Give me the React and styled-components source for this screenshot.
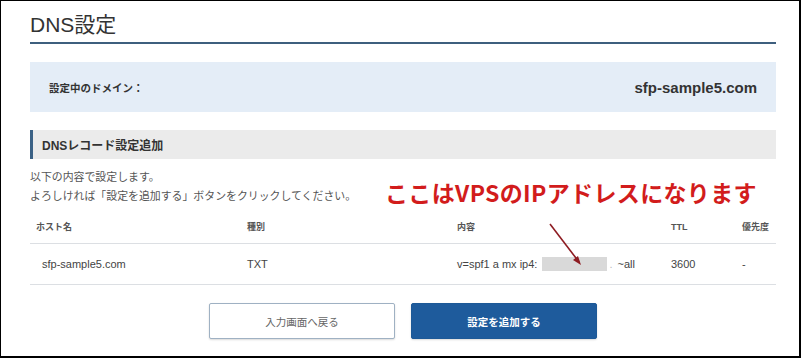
import React from "react";
import styled, { createGlobalStyle } from "styled-components";

const Global = createGlobalStyle`
  html, body { margin: 0; padding: 0; background: #fff; }
  body {
    font-family: "Liberation Sans", "Noto Sans CJK JP", sans-serif;
    color: #333;
    width: 802px;
    height: 359px;
    overflow: hidden;
  }
`;

const Frame = styled.div`
  position: relative;
  box-sizing: border-box;
  width: 801px;
  height: 358px;
  border-style: solid;
  border-color: #000;
  border-width: 1px 2px 2px 1px;
  background: #fff;
  padding-left: 29px;
`;

const Content = styled.div`
  width: 746px;
  display: flex;
  flex-direction: column;
`;

const Title = styled.h1`
  margin: 0;
  padding: 12px 0 5px 0;
  font-size: 21px;
  line-height: 24px;
  font-weight: normal;
  color: #333;
  border-bottom: 2px solid #3e5f7e;
`;

const DomainBox = styled.div`
  margin-top: 18px;
  height: 50px;
  background: #e4edf7;
  display: flex;
  align-items: center;
  justify-content: space-between;
  padding: 0 19px;
`;

const DomainLabel = styled.span`
  font-family: "Noto Sans CJK JP", sans-serif;
  font-size: 10.5px;
  font-weight: bold;
  color: #333;
`;

const DomainName = styled.span`
  font-size: 15px;
  font-weight: bold;
  color: #333;
`;

const SectionHeader = styled.div`
  margin-top: 18px;
  height: 29px;
  background: #ebebeb;
  border-left: 3px solid #3b6185;
  padding-left: 9px;
  display: flex;
  align-items: center;
  font-family: "Liberation Sans", "Noto Sans CJK JP", sans-serif;
  font-size: 12px;
  font-weight: bold;
  color: #333;
`;

const Para = styled.p`
  margin: 8px 0 0 0;
  font-family: "Noto Sans CJK JP", sans-serif;
  font-size: 10.9px;
  line-height: 19px;
  color: #555;
`;

const Row = styled.div`
  display: grid;
  grid-template-columns: 211px 210px 214px 71px 40px;
  align-items: center;
  border-bottom: 1px solid #dcdfe3;
  height: ${(p) => p.$h}px;
  padding-top: ${(p) => p.$pt || 0}px;
  box-sizing: border-box;
`;

const HeadCell = styled.div`
  padding-left: 6px;
  font-family: "Liberation Sans", "Noto Sans CJK JP", sans-serif;
  font-size: 9px;
  font-weight: bold;
  color: #555;
  line-height: 16px;
`;

const Cell = styled.div`
  padding-left: ${(p) => (p.$indent ? 12 : 6)}px;
  font-size: 11px;
  color: #444;
  white-space: nowrap;
  display: flex;
  align-items: center;
`;

const Redact = styled.span`
  display: inline-block;
  width: 65px;
  height: 14px;
  background: #d9d9d9;
  margin: 0 2px 0 5px;
`;

const Dot = styled.span`
  color: #bbb;
  margin-right: 5px;
`;

const Buttons = styled.div`
  margin-top: 18px;
  display: flex;
  justify-content: center;
  gap: 16px;
`;

const Button = styled.button`
  width: 186px;
  height: 36px;
  box-sizing: border-box;
  border-radius: 2px;
  font-family: "Noto Sans CJK JP", sans-serif;
  font-size: 10.5px;
  cursor: pointer;
  border: 1px solid ${(p) => (p.$primary ? "#1d5997" : "#9fb1c3")};
  background: ${(p) => (p.$primary ? "#1e5b9c" : "#fff")};
  color: ${(p) => (p.$primary ? "#fff" : "#666")};
  font-weight: ${(p) => (p.$primary ? "bold" : "normal")};
  box-shadow: 0 1px 2px rgba(0, 0, 0, 0.15);
`;

const Annotation = styled.div`
  position: absolute;
  left: 384px;
  top: 178px;
  font-family: "Noto Sans CJK JP", sans-serif;
  font-size: 23px;
  font-weight: bold;
  line-height: 26px;
  color: #d21c1c;
  white-space: nowrap;
  letter-spacing: 0.35px;
`;

const ArrowSvg = styled.svg`
  position: absolute;
  left: 540px;
  top: 218px;
`;

export default function App() {
  return (
    <>
      <Global />
      <Frame>
        <Content>
          <Title>DNS設定</Title>
          <DomainBox>
            <DomainLabel>設定中のドメイン：</DomainLabel>
            <DomainName>sfp-sample5.com</DomainName>
          </DomainBox>
          <SectionHeader>DNSレコード設定追加</SectionHeader>
          <Para>
            以下の内容で設定します。
            <br />
            よろしければ「設定を追加する」ボタンをクリックしてください。
          </Para>
          <Row $h={39} $pt={6}>
            <HeadCell>ホスト名</HeadCell>
            <HeadCell>種別</HeadCell>
            <HeadCell>内容</HeadCell>
            <HeadCell>TTL</HeadCell>
            <HeadCell>優先度</HeadCell>
          </Row>
          <Row $h={41}>
            <Cell $indent>sfp-sample5.com</Cell>
            <Cell>TXT</Cell>
            <Cell>
              v=spf1 a mx ip4:
              <Redact />
              <Dot>.</Dot>~all
            </Cell>
            <Cell>3600</Cell>
            <Cell>-</Cell>
          </Row>
          <Buttons>
            <Button>入力画面へ戻る</Button>
            <Button $primary>設定を追加する</Button>
          </Buttons>
        </Content>
        <Annotation>ここはVPSのIPアドレスになります</Annotation>
        <ArrowSvg width="50" height="50" viewBox="0 0 50 50">
          <line x1="9" y1="5" x2="38" y2="43" stroke="#8e1c22" strokeWidth="1.6" />
          <polygon points="40,46 32,41 37,37" fill="#8e1c22" />
        </ArrowSvg>
      </Frame>
    </>
  );
}
